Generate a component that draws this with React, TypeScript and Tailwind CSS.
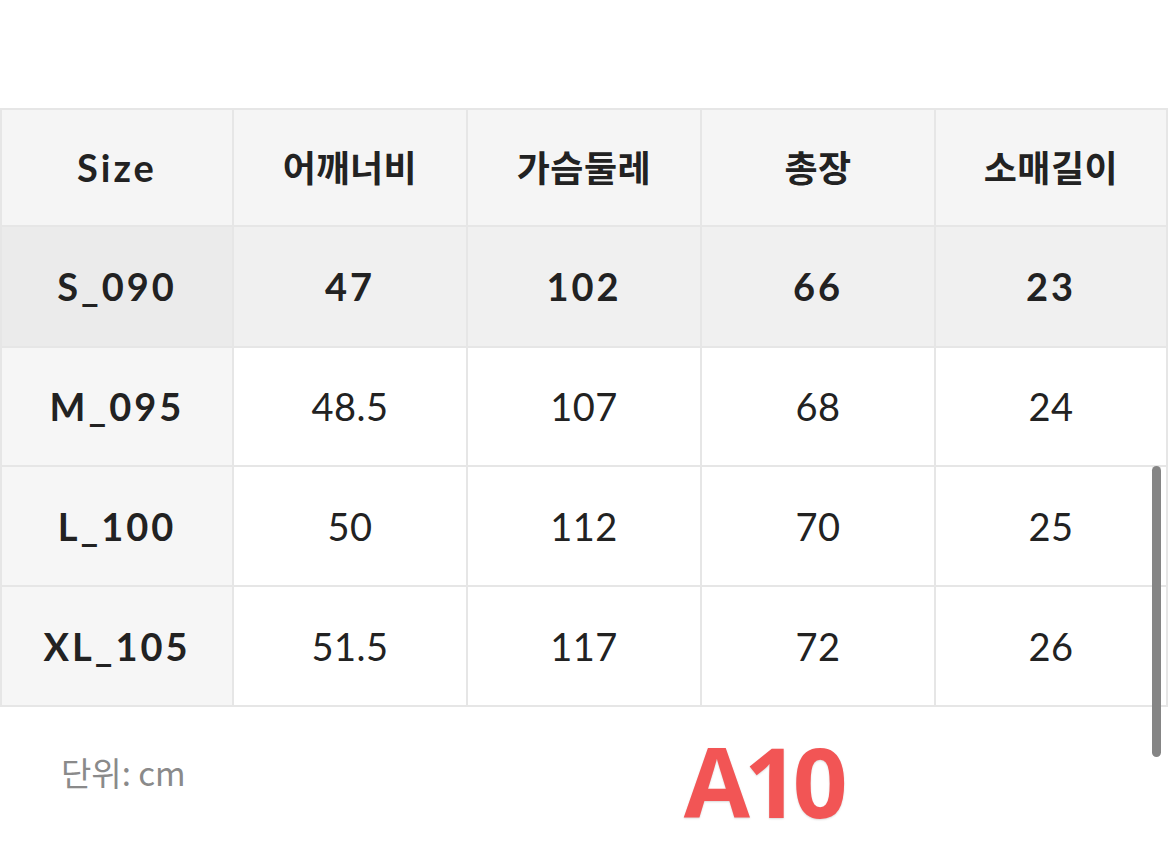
import React from "react";

const headers = ["Size", "어깨너비", "가슴둘레", "총장", "소매길이"];
const rows = [
  ["S_090", "47", "102", "66", "23"],
  ["M_095", "48.5", "107", "68", "24"],
  ["L_100", "50", "112", "70", "25"],
  ["XL_105", "51.5", "117", "72", "26"],
];

const font = { fontFamily: "Lato, 'Noto Sans CJK KR', sans-serif" };

export default function App() {
  return (
    <div className="relative w-[1170px] h-[851px] bg-white overflow-hidden text-[#222]" style={font}>
      <div className="h-[108px]" />
      <div className="grid grid-cols-[230px_232px_232px_232px_230px] grid-rows-[115px_119px_117px_118px_118px] gap-[2px] p-[2px] bg-[#e6e6e6] w-[1168px]">
        {headers.map((h, i) => (
          <div
            key={h}
            className={`flex items-center justify-center bg-[#f5f5f5] font-bold ${
              i === 0 ? "text-[38px] tracking-[3px]" : "text-[36px] tracking-[0.5px]"
            }`}
          >
            {h}
          </div>
        ))}
        {rows.map((r, ri) =>
          r.map((c, ci) => {
            let bg = "bg-white";
            if (ri === 0) bg = ci === 0 ? "bg-[#ebebeb]" : "bg-[#f0f0f0]";
            else if (ci === 0) bg = "bg-[#f6f6f6]";
            const bold = ri === 0 || ci === 0;
            return (
              <div
                key={ri + "-" + ci}
                className={`flex items-center justify-center text-[38px] ${bg} ${
                  bold ? "font-bold tracking-[3px]" : "font-normal tracking-[0.5px]"
                }`}
              >
                {c}
              </div>
            );
          })
        )}
      </div>
      <div className="flex items-start">
        <div className="pl-[61px] pt-[41px] text-[33px] text-[#8a8a8a]" style={{ fontFamily: "'Noto Sans CJK KR', Lato, sans-serif" }}>
          단위: cm
        </div>
        <div className="ml-[498px] pt-[26px] text-[96px] leading-none font-bold text-[#f25555] tracking-[-6px] [text-shadow:0_1px_2px_rgba(0,0,0,0.15)]" style={{ fontFamily: "'Open Sans', sans-serif" }}>
          A10
        </div>
      </div>
      <div className="absolute left-[1152px] top-[466px] w-[9px] h-[291px] rounded-full bg-[#858585]" />
    </div>
  );
}
